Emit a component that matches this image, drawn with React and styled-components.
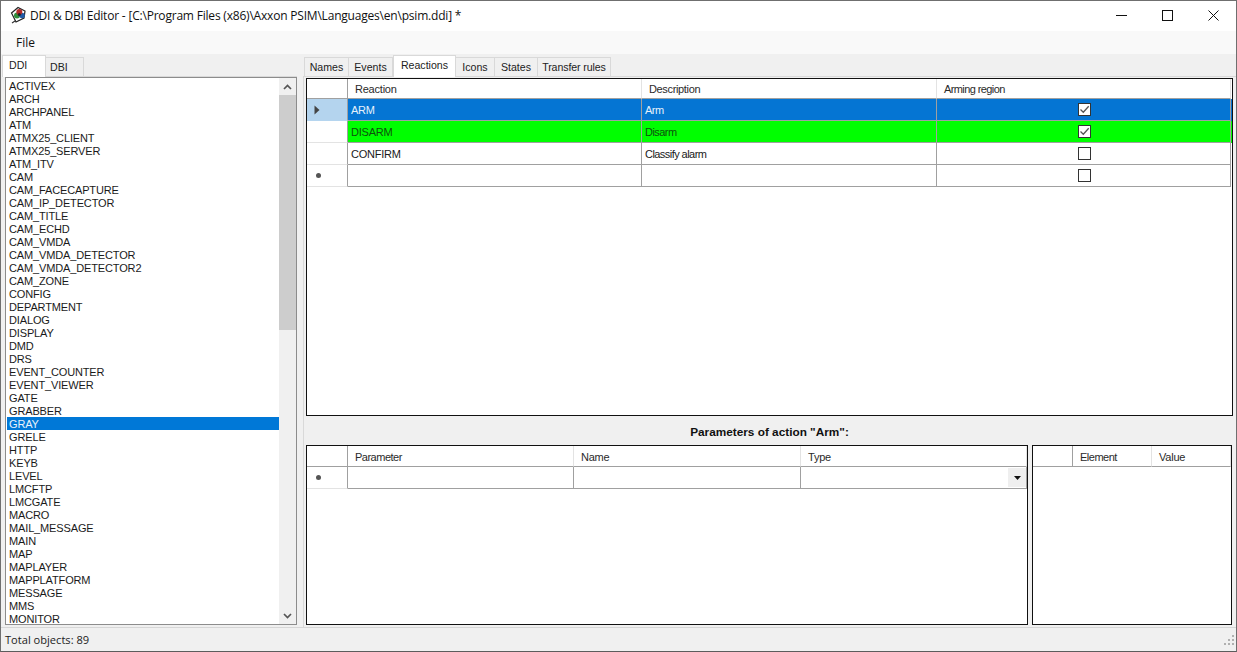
import React from "react";
import styled, { createGlobalStyle } from "styled-components";

const Global = createGlobalStyle`
  html, body { margin: 0; padding: 0; background: #f0f0f0; overflow: hidden; }
  * { box-sizing: border-box; }
`;

const Window = styled.div`
  width: 1237px; height: 652px; display: flex; flex-direction: column;
  background: #f0f0f0; border: 1px solid #6f6f6f; border-bottom-color: #5c5c5c;
  font-family: "Liberation Sans", Arial, sans-serif; font-size: 11px; color: #1a1a1a; overflow: hidden;
`;
const TitleBar = styled.div`
  height: 30px; flex: none; background: #fff; display: flex; align-items: center; padding: 0 0 2px 9px;
`;
const TitleText = styled.span`
  font-family: "Open Sans", sans-serif; font-size: 12px; color: #111; margin-left: 3px; flex: 1; white-space: nowrap; letter-spacing: -0.2px;
`;
const WinButton = styled.div`
  width: 46px; height: 28px; display: flex; align-items: center; justify-content: center;
`;
const MenuBar = styled.div`
  height: 23px; flex: none; background: #f9f9f9; display: flex; align-items: center; padding-left: 15px;
  font-family: "Open Sans", sans-serif; font-size: 12px; color: #111;
`;
const Main = styled.div`
  flex: 1; min-height: 0; display: flex; padding-top: 1px;
`;
const LeftPane = styled.div`
  width: 302px; flex: none; padding: 0 6px 0 1px; display: flex; flex-direction: column;
`;
const TabStrip = styled.div`
  height: 22px; flex: none; display: flex; align-items: flex-end; border-bottom: 1px solid #d9d9d9; padding-left: ${p => p.$pad || 0}px;
  font-size: 10.6px;
`;
const Tab = styled.div`
  width: ${p => p.$w}px; height: ${p => (p.$active ? 22 : 20)}px; margin-bottom: -1px;
  display: flex; align-items: center; white-space: nowrap;
  justify-content: ${p => (p.$inset ? "flex-start" : "center")};
  padding-left: ${p => p.$inset || 0}px;
  padding-bottom: ${p => (p.$active ? 4 : 0)}px;
  background: ${p => (p.$active ? "#fff" : "#f0f0f0")};
  border: 1px solid #d9d9d9; border-left-width: ${p => (p.$first || p.$active ? 1 : 0)}px; border-bottom: ${p => (p.$active ? "none" : "1px solid #d9d9d9")};
  color: #222; position: relative; letter-spacing: ${p => p.$ls ?? 0}px;
`;
const ListWrap = styled.div`
  flex: none; height: 548px; margin-left: 3px; border: 1px solid #8c8c8c; background: #fff; display: flex; overflow: hidden;
  letter-spacing: -0.14px;
`;
const List = styled.div`
  flex: 1; min-width: 0; padding: 1px 0 0 1px; overflow: hidden;
`;
const ListItem = styled.div`
  height: 13px; line-height: 14px; padding-left: 2px; white-space: nowrap;
  background: ${p => (p.$sel ? "#0078d7" : "transparent")};
  color: ${p => (p.$sel ? "#e8f2fb" : "#1a1a1a")};
`;
const ScrollBar = styled.div`
  width: 17px; flex: none; background: #f0f0f0; display: flex; flex-direction: column; align-items: stretch;
`;
const ScrollArrow = styled.div`
  height: 17px; flex: none; display: flex; align-items: center; justify-content: center;
`;
const ScrollThumb = styled.div`
  height: 235px; flex: none; background: #cdcdcd;
`;
const ScrollGap = styled.div` flex: 1; `;

const RightPane = styled.div`
  flex: 1; min-width: 0; display: flex; flex-direction: column;
`;
const Page = styled.div`
  flex: 1; min-height: 0; padding: 1px 3px 2px 2px; display: flex; flex-direction: column; border-left: 1px solid #d9d9d9;
`;
const Grid = styled.div`
  background: #fff; border: 1px solid #111; overflow: hidden; letter-spacing: -0.22px;
  ${p => (p.$w ? `width: ${p.$w}px; flex: none;` : "flex: 1; min-height: 0;")}
`;
const Row = styled.div`
  display: grid; grid-template-columns: ${p => p.$cols}; height: ${p => p.$h || 22}px;
  background: ${p => p.$bg || "transparent"}; color: ${p => p.$fg || "#1a1a1a"};
`;
const HeadCell = styled.div`
  display: flex; align-items: center; padding: ${p => p.$top || 0}px 0 0 7px; white-space: nowrap;
  border-right: 1px solid #e3e3e3; border-bottom: 1px solid #a0a0a0; color: #2a2a2a;
  background: #fff; letter-spacing: ${p => p.$ls ?? -0.22}px;
`;
const Corner = styled(HeadCell)`
  border-right-color: #a0a0a0; padding: 0;
`;
const RowHead = styled.div`
  display: flex; align-items: center; padding-left: ${p => p.$pad || 0}px; border-right: 1px solid #a0a0a0;
  border-bottom: 1px solid ${p => (p.$sel ? "#b5d5ef" : "#e3e3e3")};
  background: ${p => (p.$sel ? "#b4d4ee" : "#fff")};
`;
const Cell = styled.div`
  display: flex; align-items: center; padding-left: 3px; white-space: nowrap; overflow: hidden;
  border-right: 1px solid #a0a0a0; border-bottom: 1px solid #a0a0a0;
  justify-content: ${p => (p.$center ? "center" : "flex-start")};
  letter-spacing: ${p => p.$ls ?? -0.22}px;
`;
const ComboCell = styled(Cell)`
  justify-content: flex-end; padding: 1px 0;
`;
const ComboButton = styled.div`
  width: 18px; height: 19px; background: #efefef; display: flex; align-items: center; justify-content: center;
`;
const Box = styled.div`
  width: 13px; height: 13px; border: 1px solid #333; background: #fff; display: flex; align-items: center; justify-content: center; margin-right: 1px;
`;
const Star = styled.div`
  width: 5px; height: 5px; border-radius: 50%; background: #555; margin-left: 9px;
`;
const Caption = styled.div`
  height: 29px; flex: none; display: flex; align-items: center; justify-content: center; font-weight: 700; font-size: 11.8px; color: #111; padding-top: 3px;
`;
const Bottom = styled.div`
  height: 180px; flex: none; display: flex; gap: 4px;
`;
const Status = styled.div`
  height: 24px; flex: none; border-top: 1px solid #d6d6d6; display: flex; align-items: center; justify-content: space-between;
  padding: 0 1px 0 4px; font-family: "Open Sans", sans-serif; font-size: 11.1px; color: #222;
`;

const AppIcon = () => (
  <svg width="17" height="18" viewBox="0 0 17 18">
    <path d="M1.5 7 L8 1.5 L15 5 L14 12 L6 16 Z" fill="#fff" stroke="#222" strokeWidth="1.2" />
    <path d="M5 15 L2 17" stroke="#333" strokeWidth="1.2" />
    <circle cx="7" cy="9.5" r="3" fill="#2f8f3a" />
    <circle cx="12" cy="9.5" r="2.8" fill="#1f5aa8" />
    <circle cx="9.3" cy="6" r="3" fill="#b52a2a" />
    <circle cx="9.3" cy="8.6" r="1.5" fill="#222" />
  </svg>
);
const Chevron = ({ up }) => (
  <svg width="9" height="6" viewBox="0 0 9 6">
    <path d={up ? "M1 5 L4.5 1.5 L8 5" : "M1 1 L4.5 4.5 L8 1"} fill="none" stroke="#555" strokeWidth="1.7" />
  </svg>
);
const Check = () => (
  <svg width="11" height="11" viewBox="0 0 11 11">
    <path d="M1.5 5.5 L4.3 8.3 L9.7 2.3" fill="none" stroke="#555" strokeWidth="1.3" />
  </svg>
);
const Pointer = () => (
  <svg width="6" height="10" viewBox="0 0 6 10"><path d="M0.5 0.5 L5.5 5 L0.5 9.5 Z" fill="#444" /></svg>
);
const DropArrow = () => (
  <svg width="7" height="4" viewBox="0 0 7 4"><path d="M0 0 H7 L3.5 4 Z" fill="#111" /></svg>
);
const Grip = () => (
  <svg width="12" height="12" viewBox="0 0 12 12" fill="#b0b0b0">
    <rect x="9" y="1" width="2" height="2" /><rect x="5" y="5" width="2" height="2" /><rect x="9" y="5" width="2" height="2" />
    <rect x="1" y="9" width="2" height="2" /><rect x="5" y="9" width="2" height="2" /><rect x="9" y="9" width="2" height="2" />
  </svg>
);

const items = ["ACTIVEX","ARCH","ARCHPANEL","ATM","ATMX25_CLIENT","ATMX25_SERVER","ATM_ITV","CAM","CAM_FACECAPTURE","CAM_IP_DETECTOR","CAM_TITLE","CAM_ECHD","CAM_VMDA","CAM_VMDA_DETECTOR","CAM_VMDA_DETECTOR2","CAM_ZONE","CONFIG","DEPARTMENT","DIALOG","DISPLAY","DMD","DRS","EVENT_COUNTER","EVENT_VIEWER","GATE","GRABBER","GRAY","GRELE","HTTP","KEYB","LEVEL","LMCFTP","LMCGATE","MACRO","MAIL_MESSAGE","MAIN","MAP","MAPLAYER","MAPPLATFORM","MESSAGE","MMS","MONITOR"];
const tabs = [["Names",45,0],["Events",44,0],["Reactions",63,0],["Icons",39,0],["States",43,0],["Transfer rules",73,-0.1]];
const rCols = "41px 294px 295px 294px";
const rows = [
  { a: "ARM", b: "Arm", c: true, bg: "#0575d3", fg: "#e6f1fb", sel: true },
  { a: "DISARM", b: "Disarm", c: true, bg: "#00ff00", fg: "#0d520d" },
  { a: "CONFIRM", b: "Classify alarm", c: false },
];
const pCols = "41px 226px 227px 226px";
const eCols = "40px 79px 79px";

export default function App() {
  return (
    <Window>
      <Global />
      <TitleBar>
        <AppIcon />
        <TitleText>DDI &amp; DBI Editor - [C:\Program Files (x86)\Axxon PSIM\Languages\en\psim.ddi] *</TitleText>
        <WinButton>
          <svg width="11" height="11" viewBox="0 0 11 11"><path d="M0 5.5 H11" stroke="#111" /></svg>
        </WinButton>
        <WinButton>
          <svg width="11" height="11" viewBox="0 0 11 11"><rect x=".5" y=".5" width="10" height="10" fill="none" stroke="#111" /></svg>
        </WinButton>
        <WinButton>
          <svg width="11" height="11" viewBox="0 0 11 11"><path d="M.5 .5 L10.5 10.5 M10.5 .5 L.5 10.5" stroke="#111" /></svg>
        </WinButton>
      </TitleBar>
      <MenuBar>File</MenuBar>
      <Main>
        <LeftPane>
          <TabStrip>
            <Tab $w={44} $active $first $inset={6}>DDI</Tab>
            <Tab $w={38} $inset={4}>DBI</Tab>
          </TabStrip>
          <ListWrap>
            <List>
              {items.map(i => <ListItem key={i} $sel={i === "GRAY"}>{i}</ListItem>)}
            </List>
            <ScrollBar>
              <ScrollArrow><Chevron up /></ScrollArrow>
              <ScrollThumb />
              <ScrollGap />
              <ScrollArrow><Chevron /></ScrollArrow>
            </ScrollBar>
          </ListWrap>
        </LeftPane>
        <RightPane>
          <TabStrip $pad={1}>
            {tabs.map(([t, w, ls], i) => <Tab key={t} $w={w} $ls={ls} $first={i === 0} $active={t === "Reactions"}>{t}</Tab>)}
          </TabStrip>
          <Page>
            <Grid>
              <Row $cols={rCols} $h={20}>
                <Corner />
                <HeadCell>Reaction</HeadCell>
                <HeadCell $ls={-0.35}>Description</HeadCell>
                <HeadCell $ls={-0.6}>Arming region</HeadCell>
              </Row>
              {rows.map(r => (
                <Row key={r.a} $cols={rCols} $bg={r.bg} $fg={r.fg}>
                  <RowHead $sel={r.sel} $pad={7}>{r.sel && <Pointer />}</RowHead>
                  <Cell>{r.a}</Cell>
                  <Cell $ls={-0.55}>{r.b}</Cell>
                  <Cell $center><Box>{r.c && <Check />}</Box></Cell>
                </Row>
              ))}
              <Row $cols={rCols}>
                <RowHead><Star /></RowHead>
                <Cell />
                <Cell />
                <Cell $center><Box /></Cell>
              </Row>
            </Grid>
            <Caption>Parameters of action "Arm":</Caption>
            <Bottom>
              <Grid $w={722}>
                <Row $cols={pCols} $h={21}>
                  <Corner />
                  <HeadCell $ls={-0.5} $top={1}>Parameter</HeadCell>
                  <HeadCell $top={1}>Name</HeadCell>
                  <HeadCell $top={1}>Type</HeadCell>
                </Row>
                <Row $cols={pCols}>
                  <RowHead><Star /></RowHead>
                  <Cell />
                  <Cell />
                  <ComboCell><ComboButton><DropArrow /></ComboButton></ComboCell>
                </Row>
              </Grid>
              <Grid $w={200}>
                <Row $cols={eCols} $h={21}>
                  <Corner />
                  <HeadCell $ls={-0.5} $top={1}>Element</HeadCell>
                  <HeadCell $top={1}>Value</HeadCell>
                </Row>
              </Grid>
            </Bottom>
          </Page>
        </RightPane>
      </Main>
      <Status>
        <span>Total objects: 89</span>
        <Grip />
      </Status>
    </Window>
  );
}
